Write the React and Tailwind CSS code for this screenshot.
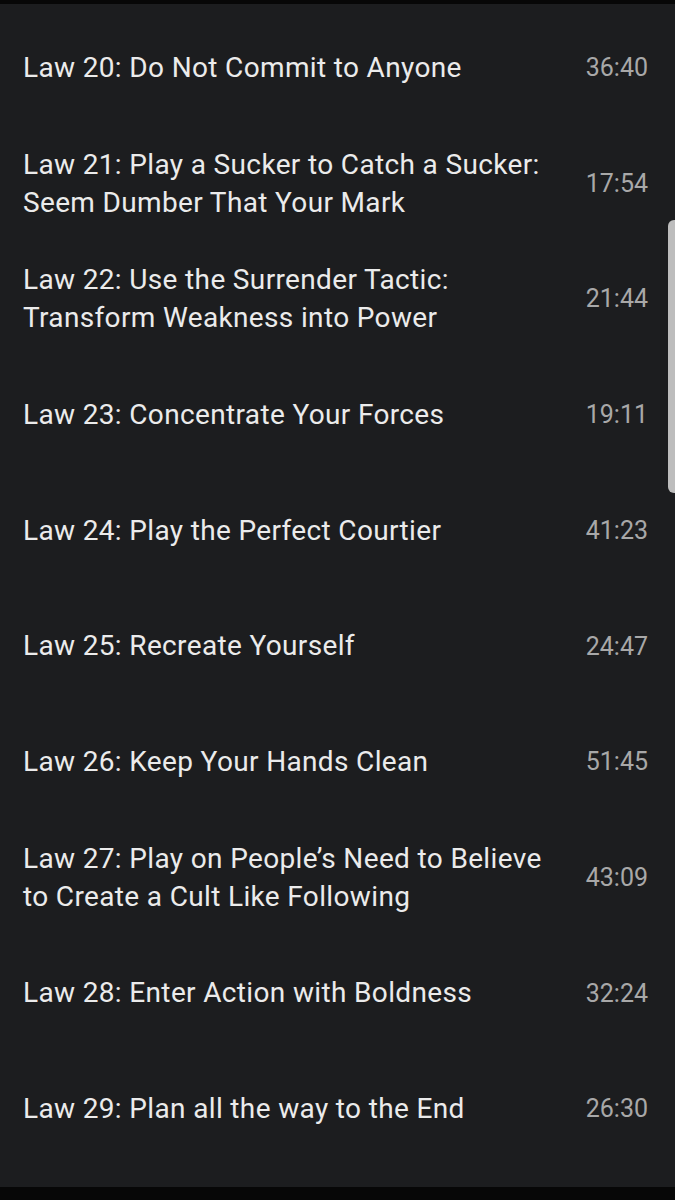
const chapters = [
  { title: 'Law 20: Do Not Commit to Anyone', time: '36:40' },
  { title: 'Law 21: Play a Sucker to Catch a Sucker: Seem Dumber That Your Mark', time: '17:54' },
  { title: 'Law 22: Use the Surrender Tactic: Transform Weakness into Power', time: '21:44' },
  { title: 'Law 23: Concentrate Your Forces', time: '19:11' },
  { title: 'Law 24: Play the Perfect Courtier', time: '41:23' },
  { title: 'Law 25: Recreate Yourself', time: '24:47' },
  { title: 'Law 26: Keep Your Hands Clean', time: '51:45' },
  { title: 'Law 27: Play on People\u2019s Need to Believe to Create a Cult Like Following', time: '43:09' },
  { title: 'Law 28: Enter Action with Boldness', time: '32:24' },
  { title: 'Law 29: Plan all the way to the End', time: '26:30' },
];

const App = () => {
  return (
    <div className="w-[675px] h-[1200px] flex flex-col bg-[#070707] font-['Roboto',sans-serif]">
      <div className="h-[4px] shrink-0" />
      <div className="relative flex-1 bg-[#1c1d1f] pt-[6px]">
        {chapters.map((ch) => (
          <div key={ch.time} className="h-[115.7px] flex items-center pl-[23px] pr-[27px]">
            <div className="w-[537px] text-[28px] leading-[38px] tracking-[0.35px] text-[#ebebeb]">{ch.title}</div>
            <div className="ml-auto text-[25px] text-[#a8a8a8]">{ch.time}</div>
          </div>
        ))}

        {/* scroll thumb */}
        <div className="absolute right-0 top-[216px] w-[7px] h-[273px] rounded-l-[6px] bg-[#bdbdbd]" />
      </div>
      <div className="h-[13px] shrink-0" />
    </div>
  );
};

export default App;
